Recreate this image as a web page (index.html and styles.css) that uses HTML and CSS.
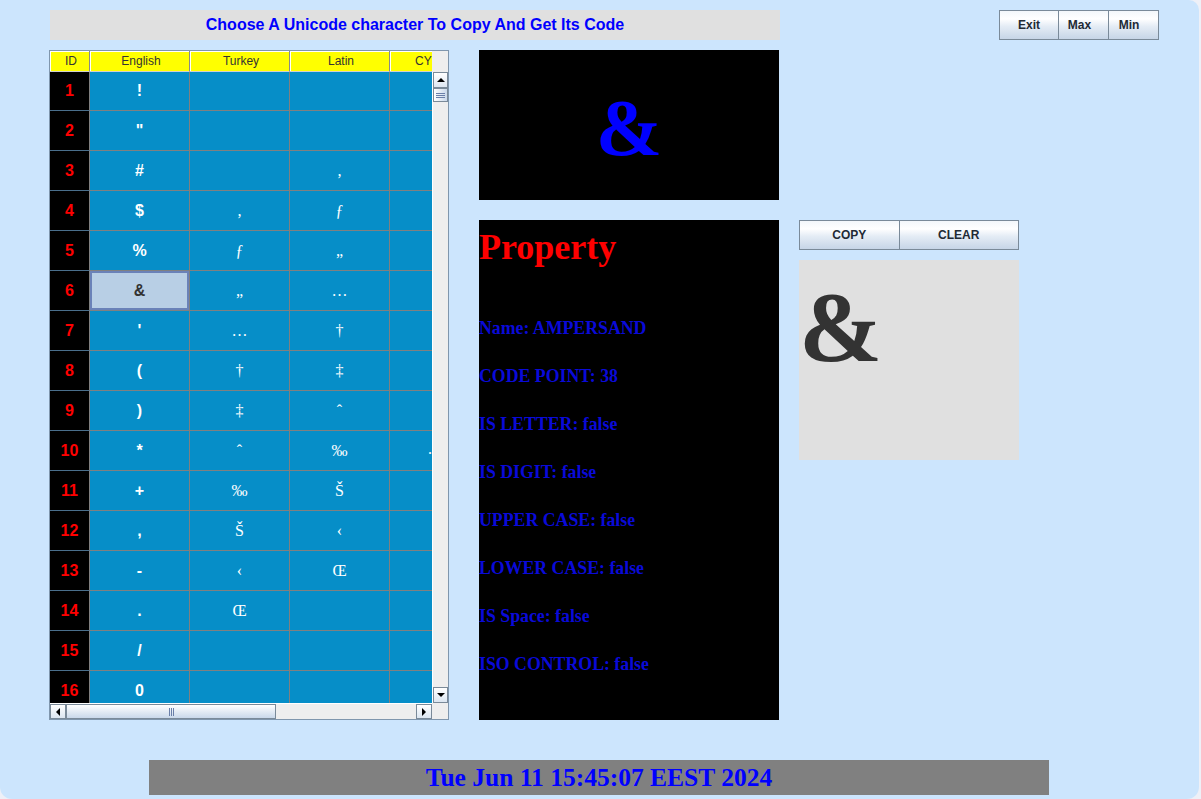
FILE: index.html
```html
<!DOCTYPE html>
<html>
<head>
<meta charset="utf-8">
<title>Unicode Chooser</title>
<link rel="stylesheet" href="styles.css">
</head>
<body>
<div class="window">
  <div class="top">
    <div class="title">Choose A Unicode character To Copy And Get Its Code</div>
    <div class="winbtns">
      <div class="btn w-exit">Exit</div>
      <div class="btn w-max">Max</div>
      <div class="btn w-min">Min</div>
    </div>
  </div>
  <div class="main">
    <div class="table">
      <div class="thead-view">
        <div class="thead">
          <div class="th">ID</div><div class="th">English</div><div class="th">Turkey</div><div class="th">Latin</div><div class="th th-cut">CYRILLIC</div>
        </div>
      </div>
      <div class="corner"></div>
      <div class="tbody-view">
        <div class="tbody">
          <div class="id">1</div><div class="c en">!</div><div class="c"></div><div class="c"></div><div class="c"></div>
          <div class="id">2</div><div class="c en">"</div><div class="c"></div><div class="c"></div><div class="c"></div>
          <div class="id">3</div><div class="c en">#</div><div class="c"></div><div class="c">‚</div><div class="c"></div>
          <div class="id">4</div><div class="c en">$</div><div class="c">‚</div><div class="c">ƒ</div><div class="c"></div>
          <div class="id">5</div><div class="c en">%</div><div class="c">ƒ</div><div class="c">„</div><div class="c"></div>
          <div class="id">6</div><div class="c en sel">&amp;</div><div class="c">„</div><div class="c">…</div><div class="c"></div>
          <div class="id">7</div><div class="c en">'</div><div class="c">…</div><div class="c">†</div><div class="c"></div>
          <div class="id">8</div><div class="c en">(</div><div class="c">†</div><div class="c">‡</div><div class="c"></div>
          <div class="id">9</div><div class="c en">)</div><div class="c">‡</div><div class="c">ˆ</div><div class="c"></div>
          <div class="id">10</div><div class="c en">*</div><div class="c">ˆ</div><div class="c">‰</div><div class="c cy">.</div>
          <div class="id">11</div><div class="c en">+</div><div class="c">‰</div><div class="c">Š</div><div class="c"></div>
          <div class="id">12</div><div class="c en">,</div><div class="c">Š</div><div class="c">‹</div><div class="c"></div>
          <div class="id">13</div><div class="c en">-</div><div class="c">‹</div><div class="c">Œ</div><div class="c"></div>
          <div class="id">14</div><div class="c en">.</div><div class="c">Œ</div><div class="c"></div><div class="c"></div>
          <div class="id">15</div><div class="c en">/</div><div class="c"></div><div class="c"></div><div class="c"></div>
          <div class="id">16</div><div class="c en">0</div><div class="c"></div><div class="c"></div><div class="c"></div>
        </div>
      </div>
      <div class="vscroll">
        <div class="sbtn"><span class="tri-up"></span></div>
        <div class="vthumb"><span class="grip-h"></span></div>
        <div class="track"></div>
        <div class="sbtn"><span class="tri-down"></span></div>
      </div>
      <div class="hscroll">
        <div class="sbtn"><span class="tri-left"></span></div>
        <div class="hthumb"><span class="grip-v"></span></div>
        <div class="track"></div>
        <div class="sbtn"><span class="tri-right"></span></div>
      </div>
      <div class="corner"></div>
    </div>
    <div class="mid">
      <div class="preview">&amp;</div>
      <div class="props">
        <div class="props-title">Property</div>
        <div class="props-list">
          <div class="prop">Name: AMPERSAND</div>
          <div class="prop">CODE POINT: 38</div>
          <div class="prop">IS LETTER: false</div>
          <div class="prop">IS DIGIT: false</div>
          <div class="prop">UPPER CASE: false</div>
          <div class="prop">LOWER CASE: false</div>
          <div class="prop">IS Space: false</div>
          <div class="prop">ISO CONTROL: false</div>
        </div>
      </div>
    </div>
    <div class="right">
      <div class="actions">
        <div class="btn a-copy">COPY</div>
        <div class="btn a-clear">CLEAR</div>
      </div>
      <div class="copybox">&amp;</div>
    </div>
  </div>
  <div class="datebar">Tue Jun 11 15:45:07 EEST 2024</div>
</div>
</body>
</html>
```

FILE: styles.css
```css
html, body {
  margin: 0;
  padding: 0;
}
body {
  background: #eef0f7;
  font-family: "Liberation Sans", Arial, sans-serif;
}
.window {
  width: 1199px;
  height: 799px;
  background: #cce5fd;
  border-radius: 0 10px 12px 12px;
  padding: 10px 0 0 49px;
  box-sizing: border-box;
  overflow: hidden;
}
.top {
  display: flex;
  height: 30px;
}
.title {
  margin-left: 1px;
  width: 730px;
  height: 30px;
  background: #e0e0e0;
  display: flex;
  align-items: center;
  justify-content: center;
  font-weight: bold;
  font-size: 16px;
  color: #0000ff;
}
.winbtns {
  margin-left: 219px;
  display: flex;
}
.btn {
  box-sizing: border-box;
  height: 30px;
  border: 1px solid #7a8a99;
  background: linear-gradient(#f3f7fb 0%, #ffffff 28%, #e4ecf5 55%, #c6d5e7 100%);
  display: flex;
  align-items: center;
  justify-content: center;
  font-weight: bold;
  font-size: 12px;
  color: #222a35;
}
.w-exit { width: 60px; }
.w-max { width: 50px; border-left: none; padding-right: 8px; }
.w-min { width: 50px; border-left: none; padding-right: 9px; }

.main {
  display: flex;
  align-items: flex-start;
  margin-top: 10px;
}
.table {
  width: 400px;
  height: 670px;
  box-sizing: border-box;
  border: 1px solid #7f96ad;
  display: grid;
  grid-template-columns: 382px 16px;
  grid-template-rows: 21px 631px 16px;
  background: #eeeeee;
}
.thead-view, .tbody-view {
  overflow: hidden;
}
.thead {
  display: grid;
  grid-template-columns: 40px 100px 100px 100px 100px;
  width: 440px;
}
.th {
  box-sizing: border-box;
  height: 21px;
  padding-left: 3px;
  background: #ffff00;
  border-right: 1px solid #8a8a8a;
  border-bottom: 1px solid #d0d0d0;
  box-shadow: inset 1px 1px 0 #ffffff;
  font-size: 12px;
  color: #333333;
  display: flex;
  align-items: center;
  justify-content: center;
}
.th-cut {
  justify-content: flex-start;
  padding-left: 25px;
}
.corner {
  background: #eeeeee;
}
.tbody {
  display: grid;
  grid-template-columns: 40px 100px 100px 100px 100px;
  grid-auto-rows: 40px;
  width: 440px;
  margin-top: -1px;
}
.id, .c {
  box-sizing: border-box;
  border-right: 1px solid #808080;
  border-bottom: 1px solid #808080;
  display: flex;
  align-items: center;
  justify-content: center;
}
.id {
  background: #000000;
  color: #ff0000;
  font-weight: bold;
  font-size: 16px;
  border-bottom-color: #4a6f8c;
}
.c {
  background: #068ec8;
  color: #ffffff;
  font-family: "Liberation Serif", "Times New Roman", serif;
  font-size: 16px;
}
.c.en {
  font-family: "Liberation Sans", Arial, sans-serif;
  font-weight: bold;
}
.c.sel {
  background: #b8cfe5;
  color: #333333;
  box-shadow: inset 0 0 0 2px #6a82b8;
}
.c.cy {
  justify-content: flex-start;
  align-items: flex-end;
  padding: 0 0 12px 38px;
}

.vscroll {
  display: flex;
  flex-direction: column;
  background: #eeeeee;
  border-left: 1px solid #ffffff;
  box-sizing: border-box;
}
.hscroll {
  display: flex;
  background: #eeeeee;
  border-top: 1px solid #ffffff;
  box-sizing: border-box;
}
.sbtn {
  flex: none;
  box-sizing: border-box;
  border: 1px solid #7a8a99;
  background: linear-gradient(#ffffff, #dce6f1);
  display: flex;
  align-items: center;
  justify-content: center;
}
.vscroll .sbtn { width: 15px; height: 16px; }
.hscroll .sbtn { width: 16px; height: 15px; }
.track {
  flex: 1;
}
.vthumb {
  height: 14px;
  box-sizing: border-box;
  border: 1px solid #7a8a99;
  background: linear-gradient(90deg, #ffffff, #c9d8ea);
  display: flex;
  align-items: center;
  justify-content: center;
}
.hthumb {
  width: 210px;
  box-sizing: border-box;
  border: 1px solid #7a8a99;
  background: linear-gradient(#ffffff, #c9d8ea);
  display: flex;
  align-items: center;
  justify-content: center;
}
.grip-h {
  width: 9px;
  height: 5px;
  background: repeating-linear-gradient(#6a7fa8 0 1px, transparent 1px 2px);
}
.grip-v {
  width: 5px;
  height: 8px;
  background: repeating-linear-gradient(90deg, #6a7fa8 0 1px, transparent 1px 2px);
}
.tri-up {
  width: 0; height: 0;
  border-left: 4px solid transparent;
  border-right: 4px solid transparent;
  border-bottom: 4px solid #000;
}
.tri-down {
  width: 0; height: 0;
  border-left: 4px solid transparent;
  border-right: 4px solid transparent;
  border-top: 4px solid #000;
}
.tri-left {
  width: 0; height: 0;
  border-top: 4px solid transparent;
  border-bottom: 4px solid transparent;
  border-right: 4px solid #000;
}
.tri-right {
  width: 0; height: 0;
  border-top: 4px solid transparent;
  border-bottom: 4px solid transparent;
  border-left: 4px solid #000;
}

.mid {
  margin-left: 30px;
  width: 300px;
}
.preview {
  height: 150px;
  box-sizing: border-box;
  padding-top: 6px;
  background: #000000;
  color: #0000ff;
  font-family: "Liberation Serif", "Times New Roman", serif;
  font-weight: bold;
  font-size: 80px;
  display: flex;
  align-items: center;
  justify-content: center;
}
.props {
  margin-top: 20px;
  height: 500px;
  box-sizing: border-box;
  padding-top: 7px;
  background: #000000;
  font-family: "Liberation Serif", "Times New Roman", serif;
  font-weight: bold;
}
.props-title {
  font-size: 36px;
  line-height: 40px;
  color: #ff0000;
}
.props-list {
  margin-top: 37px;
}
.prop {
  font-size: 17.8px;
  line-height: 48px;
  color: #0a0ad8;
}

.right {
  margin-left: 20px;
  margin-top: 170px;
  width: 220px;
}
.actions {
  display: flex;
}
.a-copy { width: 101px; }
.a-clear { width: 120px; border-left: none; }
.copybox {
  margin-top: 10px;
  height: 200px;
  box-sizing: border-box;
  padding-top: 9px;
  background: #e0e0e0;
  color: #333333;
  font-family: "Liberation Serif", "Times New Roman", serif;
  font-weight: bold;
  font-size: 100px;
}

.datebar {
  margin-top: 40px;
  margin-left: 100px;
  width: 900px;
  height: 35px;
  background: #808080;
  display: flex;
  align-items: center;
  justify-content: center;
  font-family: "Liberation Serif", "Times New Roman", serif;
  font-weight: bold;
  font-size: 25.5px;
  color: #0000ff;
}
```
